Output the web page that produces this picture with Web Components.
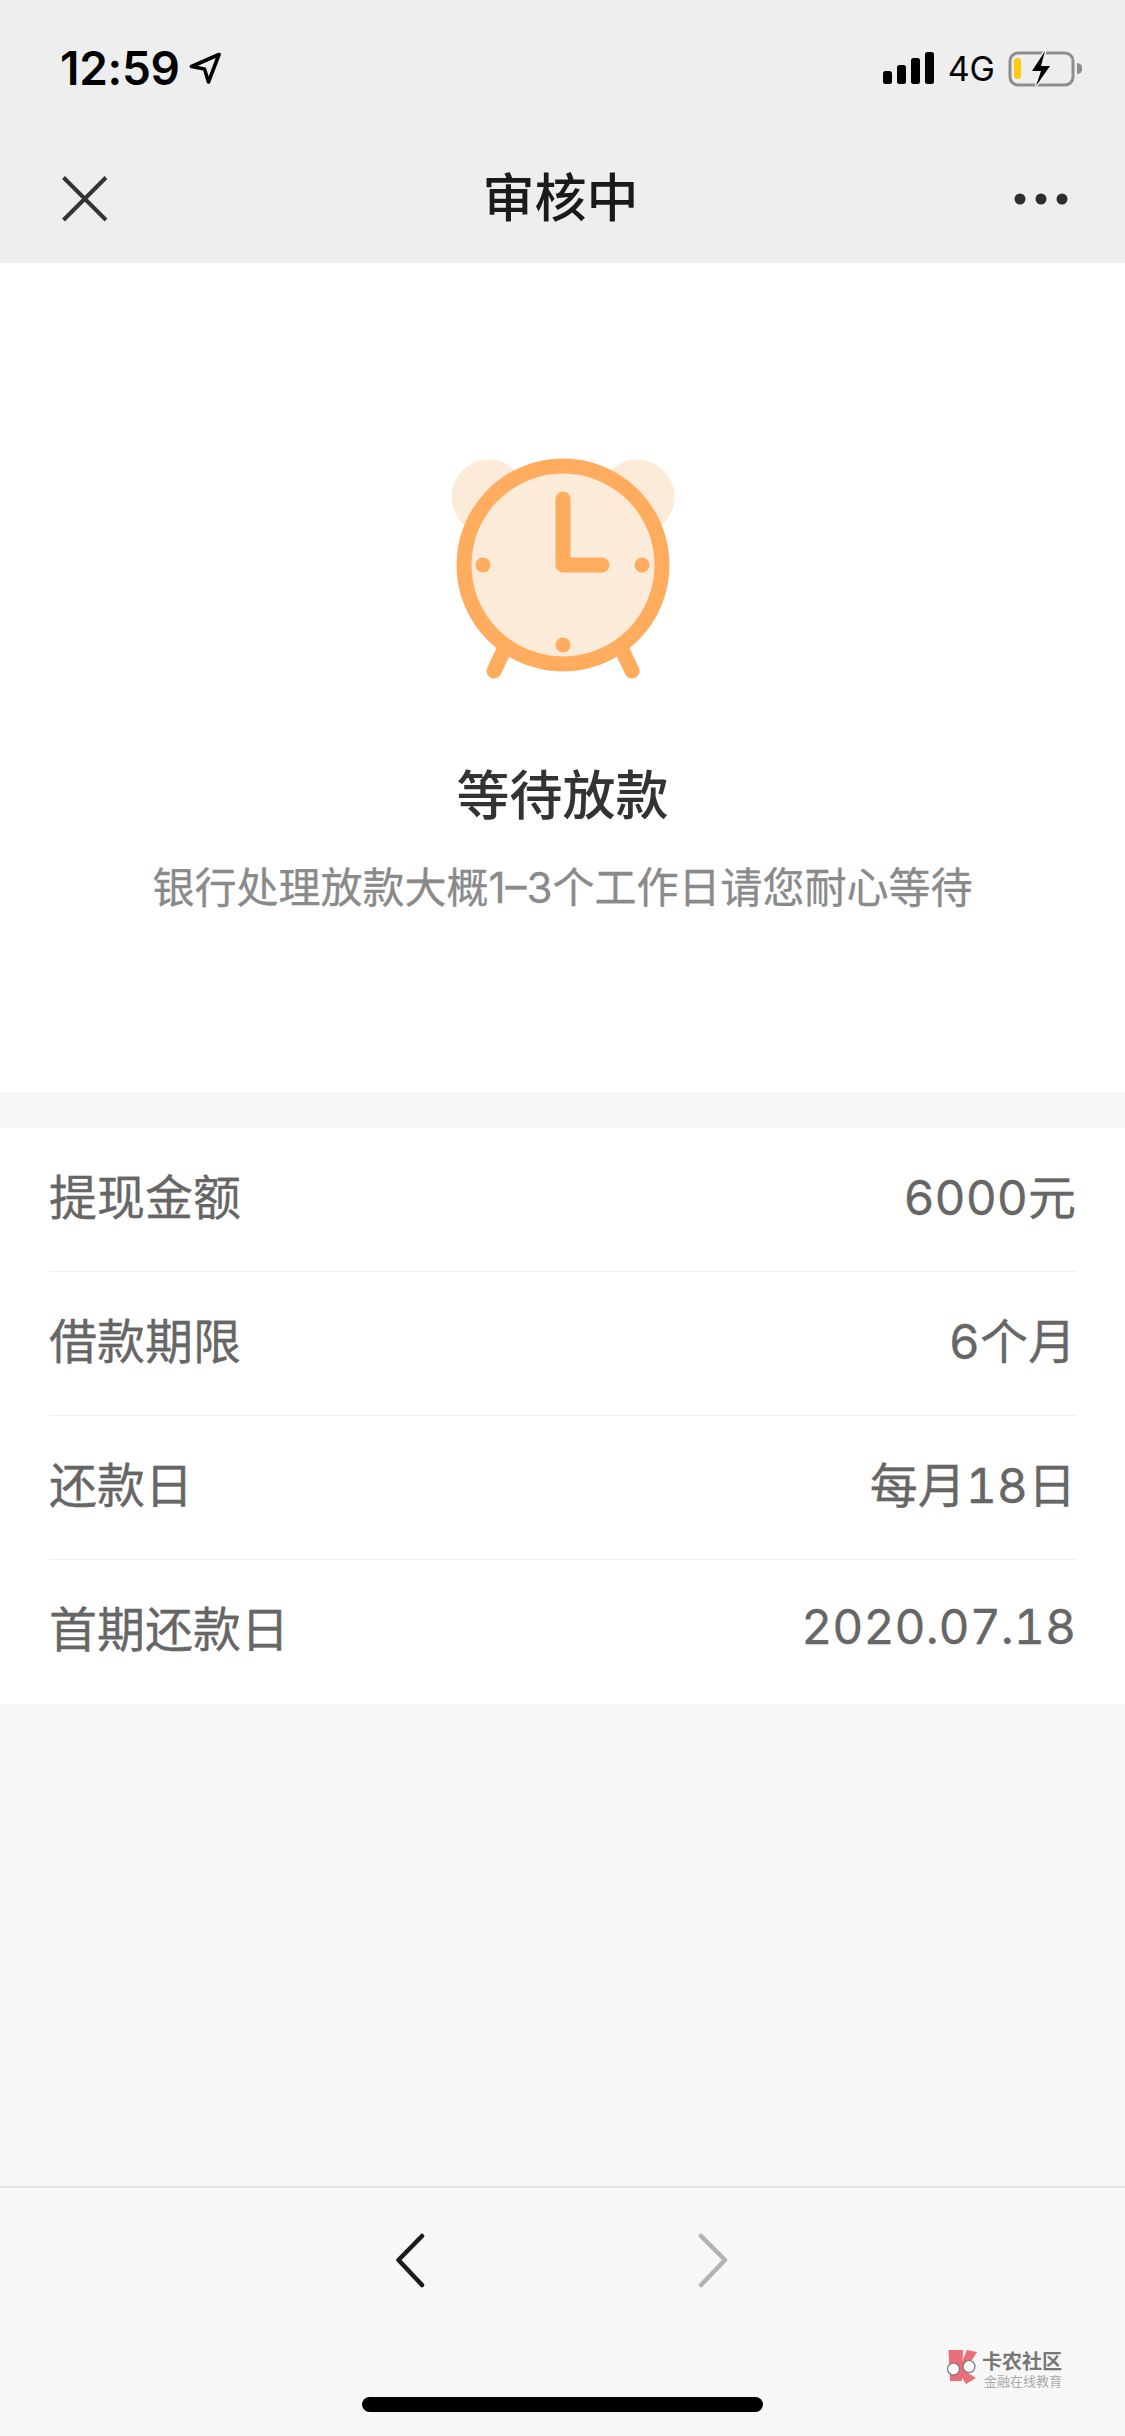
<!DOCTYPE html>
<html lang="zh-CN"><head><meta charset="utf-8"><title>审核中</title>
<style>
html,body{margin:0;padding:0;background:#f7f7f7}
body{font-family:Inter,"Noto Sans CJK SC",sans-serif;width:1125px;height:2436px;overflow:hidden}
app-shell{height:2436px}
</style></head>
<body>
<app-shell>
  <status-bar></status-bar>
  <nav-bar>审核中</nav-bar>
  <hero-state heading="等待放款" note="银行处理放款大概1–3个工作日请您耐心等待"></hero-state>
  <info-list>
    <info-row><span slot="label">提现金额</span><span slot="value">6000元</span></info-row>
    <info-row><span slot="label">借款期限</span><span slot="value">6个月</span></info-row>
    <info-row><span slot="label">还款日</span><span slot="value">每月18日</span></info-row>
    <info-row last><span slot="label">首期还款日</span><span slot="value">2020.07.18</span></info-row>
  </info-list>
  <bottom-toolbar><water-mark></water-mark></bottom-toolbar>
</app-shell>
<script>
function def(name, html){
  customElements.define(name, class extends HTMLElement{
    connectedCallback(){
      if(this.shadowRoot) return;
      const r=this.attachShadow({mode:'open'});
      r.innerHTML=typeof html==='function'?html(this):html;
    }
  });
}
def('app-shell',`<style>:host{display:flex;flex-direction:column;width:1125px;background:#f7f7f7}
::slotted(bottom-toolbar){margin-top:auto}</style><slot></slot>`);

def('status-bar',`<style>
:host{display:flex;align-items:center;justify-content:space-between;height:134px;background:#eee;padding:2px 43px 0 60px;box-sizing:border-box;color:#000}
.l{display:flex;align-items:center;gap:9px}
.t{font-size:46px;font-weight:600;line-height:50px;letter-spacing:-.3px}
.r{display:flex;align-items:center}
.n{font-size:34px;line-height:40px;font-weight:400;margin:0 13px 0 14px;padding-top:2px}
svg{display:block}
</style>
<div class="l"><span class="t">12:59</span>
<svg width="32" height="32" viewBox="0 0 32 32"><path d="M30 2.500 2.500 14.500 15.500 17 19.500 30Z" fill="none" stroke="#000" stroke-width="3.600" stroke-linejoin="round"/></svg></div>
<div class="r">
<svg width="51" height="33" viewBox="882 55 51 33"><rect x="882" y="74" width="9" height="13" rx="2.500"/><rect x="896" y="68" width="9" height="19" rx="2.500"/><rect x="910" y="61" width="9" height="26" rx="2.500"/><rect x="924" y="55" width="9" height="32" rx="2.500"/></svg>
<span class="n">4G</span>
<svg width="74" height="40" viewBox="1009 50 74 40"><rect x="1011" y="55" width="63" height="32" rx="8" fill="none" stroke="#8e8e8e" stroke-width="3"/><rect x="1015" y="60" width="7" height="21" rx="3" fill="#fccb12"/><path d="M1078 65a5.500 5.500 0 0 1 0 11Z" fill="#8e8e8e"/><path d="M1046 53 1033 73H1042L1037 88 1051 68H1042Z" fill="#000" stroke="#eee" stroke-width="3" paint-order="stroke" stroke-linejoin="miter"/></svg>
</div>`);

def('nav-bar',`<style>
:host{display:grid;grid-template-columns:1fr auto 1fr;align-items:center;height:129px;background:#eee;padding:0 57px 0 60px;box-sizing:border-box;color:#1a1a1a}
.c{font-size:52px;font-weight:500;line-height:70px;margin-left:-7px}
svg{display:block}.e{justify-self:end}
</style>
<svg width="50" height="50" viewBox="0 0 50 50"><path d="M3.500 3.500 46 46M46 3.500 3.500 46" stroke="#333" stroke-width="4" fill="none"/></svg>
<div class="c"><slot></slot></div>
<svg class="e" width="54" height="12" viewBox="0 0 54 12" fill="#2d2d2d"><circle cx="6" cy="6" r="5.500"/><circle cx="27" cy="6" r="5.500"/><circle cx="48" cy="6" r="5.500"/></svg>`);

def('hero-state',h=>`<style>
:host{display:flex;flex-direction:column;align-items:center;background:#fff;padding:187px 0 176px;box-sizing:border-box}
svg{display:block}
h1{margin:71px 0 0;font-size:53px;line-height:70px;font-weight:500;color:#333}
p{margin:29px 0 0;font-size:42px;line-height:56px;color:#8a8a8a;white-space:nowrap;-webkit-text-stroke:.3px #8a8a8a}
</style>
<svg width="240" height="240" viewBox="443 450 240 240">
<circle cx="489" cy="497" r="37.500" fill="#fdebd9"/><circle cx="637" cy="497" r="37.500" fill="#fdebd9"/>
<circle cx="563" cy="565" r="99" fill="#fdebd9" stroke="#ffac5f" stroke-width="15"/>
<path d="M503 652 494 671M623 652 632 671" stroke="#ffac5f" stroke-width="15" stroke-linecap="round" fill="none"/>
<path d="M563 499V565H602" stroke="#ffac5f" stroke-width="15" stroke-linecap="round" stroke-linejoin="round" fill="none"/>
<g fill="#ffac5f"><circle cx="483" cy="565" r="7.500"/><circle cx="642" cy="565" r="7.500"/><circle cx="563" cy="645" r="7.500"/></g>
</svg>
<h1>${h.getAttribute('heading')}</h1><p>${h.getAttribute('note')}</p>`);

def('info-list',`<style>:host{display:block;background:#fff;margin-top:36px;padding:0 49px}</style><slot></slot>`);

def('info-row',h=>`<style>
:host{display:flex;align-items:center;justify-content:space-between;height:144px;padding-bottom:12px;box-sizing:border-box;font-size:48px;color:#666;-webkit-text-stroke:.3px #666;font-feature-settings:"tnum";border-bottom:${h.hasAttribute('last')?'0':'1px solid #f1f1f1'}}
</style><slot name="label"></slot><slot name="value"></slot>`);

def('bottom-toolbar',`<style>
:host{display:flex;flex-direction:column;align-items:center;position:relative;height:250px;box-sizing:border-box;border-top:2px solid #e3e3e3;background:#f7f7f7;padding-top:44px}
.b{display:flex;gap:273px;margin-left:-3px}
.h{width:401px;height:15px;border-radius:8px;background:#000;margin-top:109px}
svg{display:block}
</style>
<div class="b">
<svg width="30" height="56" viewBox="0 0 30 56"><path d="M27 4 3.500 28 27 53" fill="none" stroke="#1a1a1a" stroke-width="4.500" stroke-linecap="round" stroke-linejoin="round"/></svg>
<svg width="30" height="56" viewBox="0 0 30 56"><path d="M3 4 27 28 3 53" fill="none" stroke="#b2b2b2" stroke-width="4.500" stroke-linecap="round" stroke-linejoin="round"/></svg>
</div><div class="h"></div><slot></slot>`);

def('water-mark',`<style>
:host{position:absolute;left:944px;top:161px;display:flex;gap:2px;align-items:flex-start;font-family:"Noto Sans CJK SC",sans-serif}
svg{display:block;flex:none}
.a{font-size:20px;line-height:20px;font-weight:700;color:#777;white-space:nowrap;margin-top:2px}
.s{font-size:13px;line-height:14px;color:#aaa;white-space:nowrap;margin-top:3px;margin-left:2px}
</style>
<svg width="36" height="36" viewBox="0 0 36 36">
<path d="M4.500 1 19 1 18 32 6 32Z" fill="#ea6f7a"/><path d="M23 1 33 3 21 22 32 29 22 35 14 22Z" fill="#ea6f7a"/>
<circle cx="9.500" cy="20" r="6" fill="#fff" stroke="#777" stroke-width="1.200"/><circle cx="25" cy="17.500" r="6" fill="#fff" stroke="#777" stroke-width="1.200"/>
</svg>
<div><div class="a">卡农社区</div><div class="s">金融在线教育</div></div>`);
</script>
</body></html>
